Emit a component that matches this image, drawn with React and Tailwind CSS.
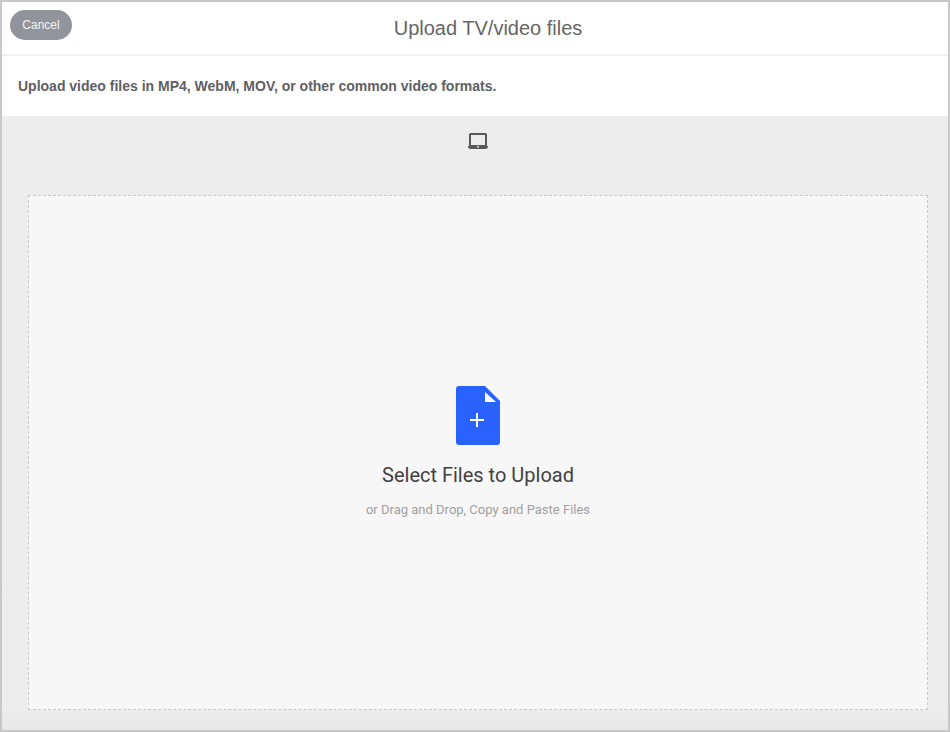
import React from 'react';

const LaptopIcon = () => (
    <svg width="20" height="16" viewBox="0 0 20 16" className="block">
        <path d="M2.5 0H17.5A1.5 1.5 0 0 1 19 1.5V13H20C20 14.7 19 16 17.5 16H2.5C1 16 0 14.7 0 13H1V1.5A1.5 1.5 0 0 1 2.5 0ZM3 2V12H17V2Z" fill="#58585a" fillRule="evenodd" />
        <rect x="9" y="13" width="2" height="1.5" fill="#d8d8d8" />
    </svg>
);

const FileAddIcon = () => (
    <svg width="44" height="59" viewBox="0 0 44 59" className="block">
        <path d="M3 0H29L44 15V56A3 3 0 0 1 41 59H3A3 3 0 0 1 0 56V3A3 3 0 0 1 3 0Z" fill="#2962ff" />
        <path d="M29 6V16H40Z" fill="#ffffff" />
        <path d="M20 27H22V33H28V35H22V41H20V35H14V33H20Z" fill="#ffffff" />
    </svg>
);

const App = () => {
    return (
        <div className="flex h-[732px] w-[950px] flex-col border-2 border-[#c8c8c8] bg-white font-['Liberation_Sans',sans-serif]">
            {/* Header */}
            <div className="flex h-[54px] shrink-0 items-start border-b-2 border-[#f0f0f0] pl-2 pr-[44px]">
                <button className="mt-2 h-[30px] w-[62px] rounded-full bg-[#92949c] text-xs text-[#f4f4f5]">Cancel</button>
                <h1 className="mt-[13px] flex-1 text-center text-xl leading-[26px] text-[#666666]">Upload TV/video files</h1>
            </div>

            {/* Description */}
            <div className="flex h-[60px] shrink-0 items-center px-4">
                <p className="text-sm font-bold text-[#5f6064]">Upload video files in MP4, WebM, MOV, or other common video formats.</p>
            </div>

            {/* Upload area */}
            <div className="flex flex-1 flex-col bg-linear-to-b from-[#ededed] from-[96%] to-[#e8e8e8] pb-5 pl-[26px] pr-5">
                <div className="flex h-[79px] shrink-0 justify-center pt-[17px]">
                    <LaptopIcon />
                </div>
                <div className="flex flex-1 flex-col items-center justify-center border border-dashed border-[#c8c8c8] bg-[#f7f7f7] font-['Roboto',sans-serif]">
                    <FileAddIcon />
                    <p className="mt-[16px] text-xl leading-[28px] text-[#424242]">Select Files to Upload</p>
                    <p className="mt-[11px] text-[13px] leading-[20px] text-[#a0a0a0]">or Drag and Drop, Copy and Paste Files</p>
                </div>
            </div>
        </div>
    );
};

export default App;
